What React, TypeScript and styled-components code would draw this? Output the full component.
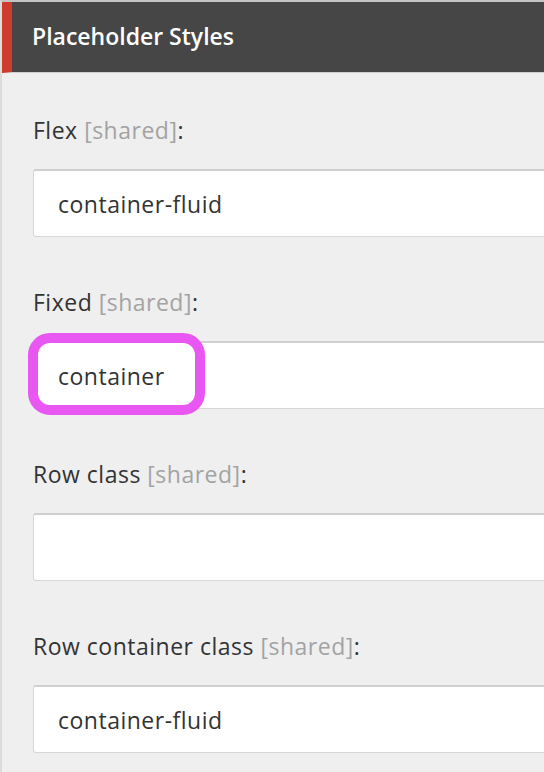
import React from "react";
import styled, { createGlobalStyle } from "styled-components";

const Global = createGlobalStyle`
  html, body { margin: 0; padding: 0; background: #efefef; overflow: hidden; }
  body { font-family: "Open Sans", "Noto Sans", sans-serif; }
`;

const Panel = styled.div`
  width: 640px;
  min-height: 772px;
  box-sizing: border-box;
  border-left: 2px solid #dcdcdc;
  border-top: 2px solid #c4c4c4;
  background: #efefef;
`;

const Header = styled.div`
  height: 71px;
  box-sizing: border-box;
  background: #464646;
  border-left: 10px solid #cf3b2c;
  border-bottom: 1px solid #cfcfcf;
  display: flex;
  align-items: center;
  padding-left: 20px;
  padding-bottom: 2px;
  color: #ffffff;
  font-size: 23px;
  font-weight: 600;
`;

const Body = styled.div`
  display: flex;
  flex-direction: column;
  padding: 43px 0 0 31px;
`;

const Field = styled.div`
  display: flex;
  flex-direction: column;
  gap: 25px;
  margin-bottom: 51px;
`;

const Label = styled.div`
  font-size: 23px;
  line-height: 28px;
  color: #333333;
  letter-spacing: 0.5px;
`;

const Shared = styled.span`
  color: #a3a3a3;
`;

const InputWrap = styled.div`
  position: relative;
`;

const Input = styled.div`
  height: 68px;
  box-sizing: border-box;
  background: #ffffff;
  border: 1px solid #d6d6d6;
  border-top: 2px solid #d0d0d0;
  border-radius: 3px;
  display: flex;
  align-items: center;
  padding-left: 24px;
  font-size: 23px;
  letter-spacing: 0.5px;
  color: #333333;
`;

const Highlight = styled.div`
  position: absolute;
  left: -5px;
  top: -8px;
  width: 177px;
  height: 82px;
  box-sizing: border-box;
  border: 10px solid #e957f2;
  border-radius: 22px;
  pointer-events: none;
`;

const fields = [
  { label: "Flex", value: "container-fluid" },
  { label: "Fixed", value: "container", highlight: true },
  { label: "Row class", value: "" },
  { label: "Row container class", value: "container-fluid" },
];

export default function App() {
  return (
    <>
      <Global />
      <Panel>
        <Header>Placeholder Styles</Header>
        <Body>
          {fields.map((f) => (
            <Field key={f.label}>
              <Label>
                {f.label} <Shared>[shared]</Shared>:
              </Label>
              <InputWrap>
                <Input>{f.value}</Input>
                {f.highlight && <Highlight />}
              </InputWrap>
            </Field>
          ))}
        </Body>
      </Panel>
    </>
  );
}
